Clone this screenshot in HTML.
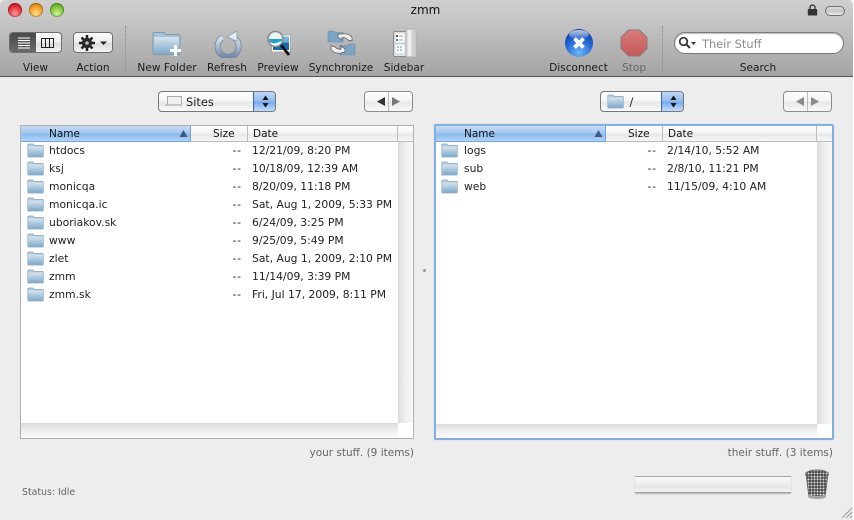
<!DOCTYPE html>
<html><head><meta charset="utf-8"><style>
html,body{margin:0;padding:0;background:#fff}
#w{position:relative;width:854px;height:520px;overflow:hidden;background:#ededed;font-family:"DejaVu Sans",sans-serif;font-size:10.4px;color:#222}
#w div,#w span.a,#w svg{position:absolute}
.t{white-space:nowrap;line-height:12px}
.c{transform:translateX(-50%)}
#tb{left:0;top:0;width:853px;height:76px;background:linear-gradient(#cfcfcf,#c6c6c6 25%,#a4a4a4);border-bottom:1px solid #555;border-radius:5px 5px 0 0}
.lb{top:62px;font-size:10.6px;color:#1c1c1c}
.dot{top:26px;width:0;height:46px;border-left:1px dotted #8a8a8a}
.tl{width:14px;height:14px;border-radius:50%;top:3px;box-shadow:inset 0 0 0 1px rgba(0,0,0,.25)}
.pop{height:21px;border:1px solid #777;border-radius:4px;background:linear-gradient(#fff,#f6f6f6 45%,#e8e8e8 55%,#fafafa);box-sizing:border-box;overflow:hidden}
.arr{width:21px;top:0;right:0;height:19px;background:linear-gradient(#c0d8f5,#93bcef 48%,#74a9ec 52%,#c3dcfb);border-left:1px solid #3f63ad}
.nav{height:21px;border:1px solid #8c8c8c;border-radius:4px;background:linear-gradient(#fff,#f4f4f4 45%,#e8e8e8 55%,#f8f8f8);box-sizing:border-box}
.tbl{background:#fff;box-sizing:border-box}
.h{top:0;height:16px;background:linear-gradient(#fff,#f4f4f4 45%,#e8e8e8 55%,#f6f6f6);border-bottom:1px solid #bcbcbc;border-right:1px solid #bdbdbd;box-sizing:border-box;font-size:10.5px;line-height:15px;color:#111}
.hs{background:linear-gradient(#c5dcf6,#a5c8f0 45%,#8abaee 55%,#b2d4f8);border-right:1px solid #7aa4d8;border-bottom:1px solid #7aa4d8}
.vs{background:linear-gradient(90deg,#dcdcdc,#efefef 50%,#f8f8f8)}
.hz{background:linear-gradient(#dcdcdc,#efefef 50%,#fafafa)}
.f{font-size:10.75px;color:#222}
.d{letter-spacing:.8px}
</style></head><body><div id="w">
<svg width="0" height="0" style="left:0;top:0"><defs>
<linearGradient id="fg" x1="0" y1="0" x2="0" y2="1"><stop offset="0" stop-color="#d6e4ef"/><stop offset="1" stop-color="#80a9ca"/></linearGradient>
<linearGradient id="rg" x1="0" y1="0" x2="0" y2="1"><stop offset="0" stop-color="#dbe3ec"/><stop offset=".5" stop-color="#a9b9cd"/><stop offset="1" stop-color="#7187a4"/></linearGradient>
<symbol id="fo" viewBox="0 0 17 15"><path d="M.8 3V2Q.8 1 1.800 1H6L7 2.300H15.500Q16.300 2.300 16.300 3V13.200Q16.300 14 15.500 14H1.500Q.8 14 .8 13.200Z" fill="#b8ccdc" stroke="#84a3bd" stroke-width=".7"/><rect x="1.200" y="3.600" width="14.700" height="10" fill="url(#fg)"/></symbol>
</defs></svg>

<div id="tb"></div>
<div style="left:853px;top:0;width:1px;height:520px;background:#fff"></div>
<div class="tl" style="left:8px;background:radial-gradient(circle at 50% 75%,#ff9a9a,#e0252e 60%,#b0161e)"></div>
<div class="tl" style="left:29px;background:radial-gradient(circle at 50% 75%,#ffe08a,#f0951c 60%,#bb6e10)"></div>
<div class="tl" style="left:50px;background:radial-gradient(circle at 50% 75%,#d0f59a,#74bd2e 60%,#4d8a1c)"></div>
<div class="t c" style="left:425.500px;top:4px;font-size:12px;color:#111">zmm</div>
<svg style="left:807px;top:4px" width="11" height="12" viewBox="0 0 11 12"><path d="M3 5V3.500A2.500 2.500 0 0 1 8 3.500V5" fill="none" stroke="#333" stroke-width="1.300"/><rect x=".8" y="5" width="9.400" height="6.500" rx=".8" fill="#333"/></svg>
<div style="left:825px;top:6px;width:18px;height:8px;border:1px solid #6f6f6f;border-radius:6px;background:linear-gradient(#e0e0e0,#c4c4c4 50%,#f0f0f0)"></div>

<!-- view seg -->
<div style="left:9px;top:32px;width:53px;height:21px;border:1px solid #6e6e6e;border-radius:4px;box-sizing:border-box;background:linear-gradient(#fff,#ececec 50%,#dcdcdc 55%,#f4f4f4);overflow:hidden">
<div style="left:0;top:0;width:26px;height:19px;background:linear-gradient(#4a4a4a,#6a6a6a)"></div>
<svg style="left:0;top:0" width="51" height="19"><path d="M8 5H20M8 7.500H20M8 10H20M8 12.500H20M8 15H20" stroke="#fff" stroke-width="1"/><rect x="31.500" y="5.500" width="12" height="9" fill="none" stroke="#222"/><path d="M35.500 5.500V14.500M39.500 5.500V14.500" stroke="#222"/></svg>
</div>
<div class="t c lb" style="left:35.500px">View</div>
<!-- action -->
<div style="left:73px;top:32px;width:40px;height:21px;border:1px solid #6e6e6e;border-radius:4px;box-sizing:border-box;background:linear-gradient(#fff,#ececec 50%,#dcdcdc 55%,#f4f4f4)"></div>
<svg style="left:79px;top:35px" width="30" height="16" viewBox="0 0 30 16"><g stroke="#222" stroke-width="2.500"><path d="M8 0V16M0 8H16M2.500 2.500L13.500 13.500M13.500 2.500L2.500 13.500"/></g><circle cx="8" cy="8" r="5.200" fill="#2a2a2a"/><circle cx="8" cy="8" r="1.800" fill="#bbb"/><path d="M21 6.500H28L24.500 10Z" fill="#222"/></svg>
<div class="t c lb" style="left:93px">Action</div>
<div class="dot" style="left:125px"></div>

<!-- New folder -->
<svg style="left:152px;top:30px" width="32" height="28" viewBox="0 0 32 28"><path d="M1 7V4Q1 2.500 2.500 2.500H12L14 4.500H26Q28 4.500 28 6V23Q28 24.500 26.500 24.500H2.500Q1 24.500 1 23Z" fill="#a9c1d6" stroke="#7e9ab4"/><rect x="2" y="7" width="25" height="17" fill="url(#fg)"/><path d="M22 15H25V19H29V22H25V26H22V22H18V19H22Z" fill="#fff"/></svg>
<div class="t c lb" style="left:167px">New Folder</div>
<!-- refresh -->
<svg style="left:214px;top:30px" width="28" height="28" viewBox="0 0 28 28"><path d="M8.500 7.500A10.500 10.500 0 1 0 20.500 8" fill="none" stroke="#6f84a0" stroke-width="6"/><path d="M8.500 7.500A10.500 10.500 0 1 0 20.500 8" fill="none" stroke="url(#rg)" stroke-width="4.500"/><path d="M23 1V11.500L13 6.500Z" fill="#e6ebf1" stroke="#8b9bb0" stroke-width=".8"/></svg>
<div class="t c lb" style="left:227px">Refresh</div>
<!-- preview -->
<svg style="left:265px;top:29px" width="28" height="30" viewBox="0 0 28 30"><rect x="6.500" y="6" width="19" height="17" fill="#fff" stroke="#aaa"/><rect x="8" y="7.500" width="16" height="6" fill="#6fb4de"/><rect x="8" y="13.500" width="16" height="7.500" fill="#1a6aa8"/><circle cx="10.500" cy="10" r="7.500" fill="#eef7f8" stroke="#8a8a8a" stroke-width="1.600"/><path d="M4 10H17V11.500Q10.500 16 4.500 13Z" fill="#23a0c9"/><path d="M16 16L24 26" stroke="#111" stroke-width="2.800"/></svg>
<div class="t c lb" style="left:278px">Preview</div>
<div class="t c lb" style="left:341px">Synchronize</div>
<!-- sync -->
<svg style="left:327px;top:29px" width="30" height="30" viewBox="0 0 30 30"><path d="M1 3.500Q1 2 2.500 2H7L8.500 3.500H16V13H1Z" fill="#7ea4c4" stroke="#6d8ba8" stroke-width=".6"/><path d="M14 16.500H20L21.500 15H28V26H13V16.500Z" fill="#7ea4c4" stroke="#6d8ba8" stroke-width=".6"/><path d="M11 8V5L15 5Q22 4 25 8.500V12L21 11Q18 8 15 8.500V11Z" fill="#f0f0f0" stroke="#555" stroke-width=".7"/><path d="M18 20V23L14 24Q7 25 4 20V16.500L8 18Q11 21 14 20V17Z" fill="#f0f0f0" stroke="#555" stroke-width=".7"/></svg>
<!-- sidebar -->
<svg style="left:392px;top:28px" width="26" height="30" viewBox="0 0 26 30"><rect x="1.500" y="3.500" width="22" height="25" rx="1" fill="#e6e6e6" stroke="#8b8b8b"/><rect x="14" y="1" width="10" height="28" rx="1" fill="#cfcfcf" stroke="#aaa" stroke-width=".6"/><rect x="15.500" y="2" width="4" height="26" fill="#eee"/><rect x="3" y="5" width="10" height="10" fill="#fff" stroke="#aaa" stroke-width=".5"/><rect x="3" y="16" width="10" height="10" fill="#fff" stroke="#aaa" stroke-width=".5"/><rect x="4" y="7" width="2" height="2" fill="#555"/><rect x="4" y="11" width="2" height="2" fill="#28d"/><path d="M7 8H11M7 12H11" stroke="#999"/><path d="M5 19H11M5 22H11" stroke="#49c" stroke-dasharray="2 1"/></svg>
<div class="t c lb" style="left:404px">Sidebar</div>

<!-- disconnect -->
<div style="left:565px;top:29px;width:28px;height:28px;border-radius:50%;background:radial-gradient(circle at 50% 85%,#6fb8f8,#1c5fd0 55%,#0a2a80)"></div>
<div style="left:569px;top:30px;width:20px;height:9px;border-radius:50%;background:linear-gradient(rgba(255,255,255,.75),rgba(255,255,255,.1))"></div>
<svg style="left:565px;top:29px" width="28" height="28"><path d="M9.500 9.500L18.500 18.500M18.500 9.500L9.500 18.500" stroke="#fff" stroke-width="3.800"/></svg>
<div class="t c lb" style="left:578.500px">Disconnect</div>
<!-- stop -->
<svg style="left:620px;top:29px" width="28" height="28" viewBox="0 0 28 28"><defs><linearGradient id="sg" x1="0" y1="0" x2="0" y2="1"><stop offset="0" stop-color="#d97a7a"/><stop offset="1" stop-color="#c45a5c"/></linearGradient></defs><path d="M8.500 1H19.500L27 8.500V19.500L19.500 27H8.500L1 19.500V8.500Z" fill="url(#sg)" stroke="#8e7676"/></svg>
<div class="t c lb" style="left:634px;color:#666">Stop</div>
<div class="dot" style="left:662px"></div>
<!-- search -->
<div style="left:674px;top:32px;width:170px;height:22px;border:1px solid #7a7a7a;border-radius:11px;background:#fff;box-sizing:border-box;box-shadow:inset 0 1px 1px #bbb"></div>
<svg style="left:678px;top:36px" width="20" height="14" viewBox="0 0 20 14"><circle cx="5.500" cy="5.500" r="3.800" fill="none" stroke="#333" stroke-width="1.700"/><path d="M8.500 8.500L12 12" stroke="#333" stroke-width="2"/><path d="M13 6H18L15.500 9Z" fill="#333"/></svg>
<div class="t" style="left:702px;top:37.500px;font-size:11.400px;color:#8c8c8c">Their Stuff</div>
<div class="t c lb" style="left:758px">Search</div>

<!-- popups -->
<div class="pop" style="left:158px;top:91px;width:118px"><div class="arr"></div></div>
<svg style="left:255px;top:91px" width="21" height="21"><path d="M10.500 4.500L13.500 9H7.500ZM10.500 16.500L13.500 12H7.500Z" fill="#111"/></svg>
<div style="left:167px;top:96px;width:13px;height:7px;border:1px solid #aaa;background:#f0f0f0"></div>
<div style="left:165px;top:104px;width:17px;height:2px;background:#c5c5c5"></div>
<div class="t" style="left:186px;top:96px;font-size:11.400px;color:#222">Sites</div>
<div class="nav" style="left:364px;top:91px;width:49px"><div style="left:23px;top:0;width:1px;height:19px;background:#bbb"></div></div>
<svg style="left:364px;top:91px" width="49" height="21"><path d="M13 10.500L21 6V15Z" fill="#333"/><path d="M36 10.500L28 6V15Z" fill="#777"/></svg>

<div class="pop" style="left:600px;top:91px;width:84px"><div class="arr"></div></div>
<svg style="left:663px;top:91px" width="21" height="21"><path d="M10.500 4.500L13.500 9H7.500ZM10.500 16.500L13.500 12H7.500Z" fill="#111"/></svg>
<svg style="left:607px;top:94px" width="17" height="15"><use href="#fo" width="17" height="15"/></svg>
<div class="t" style="left:629.500px;top:96px;font-size:11.400px;color:#222">/</div>
<div class="nav" style="left:783px;top:91px;width:49px"><div style="left:23px;top:0;width:1px;height:19px;background:#bbb"></div></div>
<svg style="left:783px;top:91px" width="49" height="21"><path d="M13 10.500L21 6V15Z" fill="#8a8a8a"/><path d="M36 10.500L28 6V15Z" fill="#8a8a8a"/></svg>

<!-- left table -->
<div class="tbl" style="left:20px;top:125px;width:394px;height:314px;border:1px solid #b0b0b0">
<div class="h hs" style="left:0;width:170px"><span class="a" style="left:28px;top:1px">Name</span></div>
<svg style="left:158px;top:4px" width="9" height="8"><path d="M4.500 0L8.500 7H.5Z" fill="#3d5a80"/></svg>
<div class="h" style="left:170px;width:57px"><span class="a" style="left:22px;top:1px">Size</span></div>
<div class="h" style="left:227px;width:150px"><span class="a" style="left:5px;top:1px">Date</span></div>
<div class="h" style="left:377px;width:15px;border-right:0"></div>
<div class="vs" style="left:377px;top:16px;width:15px;height:281px"></div>
<div class="hz" style="left:0;top:297px;width:377px;height:15px"></div>
</div>

<!-- left rows -->
<svg style="left:27px;top:143px" width="17" height="15"><use href="#fo" width="17" height="15"/></svg>
<svg style="left:27px;top:161px" width="17" height="15"><use href="#fo" width="17" height="15"/></svg>
<svg style="left:27px;top:179px" width="17" height="15"><use href="#fo" width="17" height="15"/></svg>
<svg style="left:27px;top:197px" width="17" height="15"><use href="#fo" width="17" height="15"/></svg>
<svg style="left:27px;top:215px" width="17" height="15"><use href="#fo" width="17" height="15"/></svg>
<svg style="left:27px;top:233px" width="17" height="15"><use href="#fo" width="17" height="15"/></svg>
<svg style="left:27px;top:251px" width="17" height="15"><use href="#fo" width="17" height="15"/></svg>
<svg style="left:27px;top:269px" width="17" height="15"><use href="#fo" width="17" height="15"/></svg>
<svg style="left:27px;top:287px" width="17" height="15"><use href="#fo" width="17" height="15"/></svg>
<div class="t f" style="left:49px;top:145px">htdocs</div><div class="t f d" style="left:232.500px;top:145px">--</div><div class="t f" style="left:252px;top:145px">12/21/09, 8:20 PM</div>
<div class="t f" style="left:49px;top:163px">ksj</div><div class="t f d" style="left:232.500px;top:163px">--</div><div class="t f" style="left:252px;top:163px">10/18/09, 12:39 AM</div>
<div class="t f" style="left:49px;top:181px">monicqa</div><div class="t f d" style="left:232.500px;top:181px">--</div><div class="t f" style="left:252px;top:181px">8/20/09, 11:18 PM</div>
<div class="t f" style="left:49px;top:199px">monicqa.ic</div><div class="t f d" style="left:232.500px;top:199px">--</div><div class="t f" style="left:252px;top:199px">Sat, Aug 1, 2009, 5:33 PM</div>
<div class="t f" style="left:49px;top:217px">uboriakov.sk</div><div class="t f d" style="left:232.500px;top:217px">--</div><div class="t f" style="left:252px;top:217px">6/24/09, 3:25 PM</div>
<div class="t f" style="left:49px;top:235px">www</div><div class="t f d" style="left:232.500px;top:235px">--</div><div class="t f" style="left:252px;top:235px">9/25/09, 5:49 PM</div>
<div class="t f" style="left:49px;top:253px">zlet</div><div class="t f d" style="left:232.500px;top:253px">--</div><div class="t f" style="left:252px;top:253px">Sat, Aug 1, 2009, 2:10 PM</div>
<div class="t f" style="left:49px;top:271px">zmm</div><div class="t f d" style="left:232.500px;top:271px">--</div><div class="t f" style="left:252px;top:271px">11/14/09, 3:39 PM</div>
<div class="t f" style="left:49px;top:289px">zmm.sk</div><div class="t f d" style="left:232.500px;top:289px">--</div><div class="t f" style="left:252px;top:289px">Fri, Jul 17, 2009, 8:11 PM</div>

<div style="left:423px;top:269px;width:3px;height:3px;background:#999;border-radius:50%"></div>

<!-- right table -->
<div class="tbl" style="left:434px;top:124px;width:400px;height:316px;border:2px solid #84aede;border-radius:2px;box-shadow:0 0 1px #a9c6ea">
<div class="h hs" style="left:0;width:170px"><span class="a" style="left:28px;top:1px">Name</span></div>
<svg style="left:158px;top:4px" width="9" height="8"><path d="M4.500 0L8.500 7H.5Z" fill="#3d5a80"/></svg>
<div class="h" style="left:170px;width:57px"><span class="a" style="left:22px;top:1px">Size</span></div>
<div class="h" style="left:227px;width:154px"><span class="a" style="left:5px;top:1px">Date</span></div>
<div class="h" style="left:381px;width:15px;border-right:0"></div>
<div class="vs" style="left:381px;top:16px;width:15px;height:282px"></div>
<div class="hz" style="left:0;top:298px;width:381px;height:14px"></div>
</div>
<svg style="left:441px;top:143px" width="17" height="15"><use href="#fo" width="17" height="15"/></svg>
<svg style="left:441px;top:161px" width="17" height="15"><use href="#fo" width="17" height="15"/></svg>
<svg style="left:441px;top:179px" width="17" height="15"><use href="#fo" width="17" height="15"/></svg>
<div class="t f" style="left:464px;top:145px">logs</div><div class="t f d" style="left:647.500px;top:145px">--</div><div class="t f" style="left:667px;top:145px">2/14/10, 5:52 AM</div>
<div class="t f" style="left:464px;top:163px">sub</div><div class="t f d" style="left:647.500px;top:163px">--</div><div class="t f" style="left:667px;top:163px">2/8/10, 11:21 PM</div>
<div class="t f" style="left:464px;top:181px">web</div><div class="t f d" style="left:647.500px;top:181px">--</div><div class="t f" style="left:667px;top:181px">11/15/09, 4:10 AM</div>

<div class="t" style="right:440px;top:447px;color:#666;font-size:10.500px">your stuff. (9 items)</div>
<div class="t" style="right:21px;top:447px;color:#666;font-size:10.500px">their stuff. (3 items)</div>
<div class="t" style="left:22px;top:487px;color:#666;font-size:9.400px">Status: Idle</div>

<!-- progress -->
<div style="left:635px;top:476px;width:156px;height:17px;box-sizing:border-box;border-top:1px solid #a5a5a5;border-bottom:1px solid #a0a0a0;background:linear-gradient(#f8f8f8,#f0f0f0 40%,#e6e6e6 60%,#f2f2f2);box-shadow:0 1px 1px #b5b5b5"></div>
<!-- trash -->
<svg style="left:804px;top:469px" width="26" height="32" viewBox="0 0 26 32"><defs><pattern id="m" width="3" height="3" patternUnits="userSpaceOnUse"><rect width="3" height="3" fill="#444"/><circle cx="1.500" cy="1.500" r="1" fill="#e4e4e4"/></pattern></defs><path d="M2 4L5 28Q13 31 21 28L24 4Z" fill="url(#m)" stroke="#666"/><ellipse cx="13" cy="5" rx="11.500" ry="4" fill="url(#m)" stroke="#777"/><path d="M4.500 25.500Q13 28.500 21.500 25.500L21 29Q13 31 5 29Z" fill="#a5a5a5"/></svg>
<svg style="left:841px;top:507px" width="12" height="12"><path d="M1 11L11 1M5 11L11 5M9 11L11 9" stroke="#999"/></svg>
</div></body></html>
